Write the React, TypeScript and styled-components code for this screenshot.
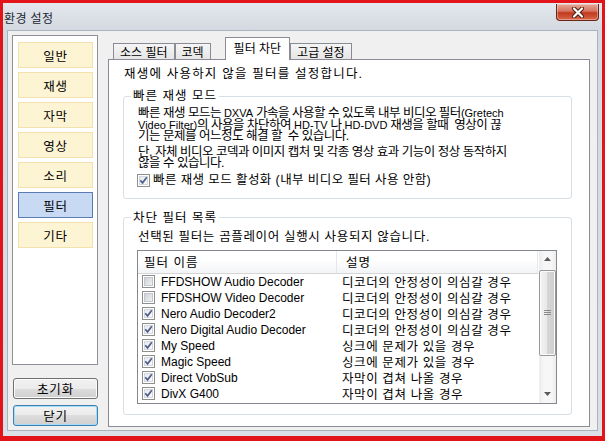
import React from 'react';
import styled, { createGlobalStyle } from 'styled-components';

const UI_FONT = `"Liberation Sans", "Noto Sans CJK KR", sans-serif`;

const GlobalStyle = createGlobalStyle`
  html, body { margin: 0; padding: 0; }
  body {
    width: 605px;
    height: 441px;
    overflow: hidden;
    background: #fff;
    font-family: ${UI_FONT};
    font-size: 12px;
    color: #000;
  }
`;

const NAV_ITEMS = ['일반', '재생', '자막', '영상', '소리', '필터', '기타'];
const ACTIVE_NAV = '필터';

const TABS = ['소스 필터', '코덱', '필터 차단', '고급 설정'];
const ACTIVE_TAB = '필터 차단';

const FILTERS: [string, string, boolean][] = [
  ['FFDSHOW Audio Decoder', '디코더의 안정성이 의심갈 경우', false],
  ['FFDSHOW Video Decoder', '디코더의 안정성이 의심갈 경우', false],
  ['Nero Audio Decoder2', '디코더의 안정성이 의심갈 경우', true],
  ['Nero Digital Audio Decoder', '디코더의 안정성이 의심갈 경우', true],
  ['My Speed', '싱크에 문제가 있을 경우', true],
  ['Magic Speed', '싱크에 문제가 있을 경우', true],
  ['Direct VobSub', '자막이 겹쳐 나올 경우', true],
  ['DivX G400', '자막이 겹쳐 나올 경우', true],
];

const Window = styled.div`
  width: 605px;
  height: 441px;
  box-sizing: border-box;
  border: 3px solid #e3131a;
  border-bottom-width: 5px;
  background: linear-gradient(#e4e8ed, #d3d9e0 27px, #dbe0e6);
  display: flex;
  flex-direction: column;
`;

const TitleBar = styled.div`
  height: 27px;
  flex: none;
  display: flex;
  justify-content: space-between;
  padding: 0 3px 0 1px;
`;

const Title = styled.span`
  align-self: center;
  margin-top: 2px;
  font-size: 12px;
  letter-spacing: 0.4px;
  color: #1b2733;
`;

const CloseButton = styled.div`
  margin-top: 1px;
  width: 43px;
  height: 17px;
  box-sizing: border-box;
  border: 1px solid #6b2418;
  border-top: none;
  border-radius: 0 0 4px 4px;
  background: linear-gradient(#e7a89a, #d4735f 45%, #c2391d 55%, #d9684c);
  box-shadow: inset 0 0 0 1px rgba(255, 255, 255, 0.35);
  display: flex;
  align-items: center;
  justify-content: center;
`;

const Client = styled.div`
  flex: 1;
  margin: 0 4px 5px;
  border: 1px solid #a9b3bd;
  background: #f0f0f0;
  display: flex;
  gap: 10px;
  padding: 4px 7px 3px 4px;
`;

const LeftCol = styled.div`
  width: 86px;
  flex: none;
  display: flex;
  flex-direction: column;
`;

const NavPanel = styled.div`
  height: 330px;
  box-sizing: border-box;
  border: 1px solid #8d9197;
  background: #fff;
  padding: 6px 0 0 5px;
  display: flex;
  flex-direction: column;
  gap: 4px;
`;

const NavItem = styled.div<{ $active?: boolean }>`
  width: 75px;
  height: 26px;
  box-sizing: border-box;
  border: 1px solid ${(p) => (p.$active ? '#5a7cb3' : '#f2e1ad')};
  background: ${(p) => (p.$active ? '#c8d9f4' : '#fdf4d4')};
  display: flex;
  align-items: center;
  justify-content: center;
  font-size: 12.5px;
  letter-spacing: 0.8px;
`;

const PushButton = styled.div<{ $default?: boolean }>`
  width: 85px;
  height: 21px;
  box-sizing: border-box;
  margin-left: 1px;
  border: 1px solid ${(p) => (p.$default ? '#3c7fb1' : '#707070')};
  border-radius: 3px;
  background: linear-gradient(#f2f2f2, #ebebeb 50%, #dddddd 50%, #cfcfcf);
  box-shadow: inset 0 0 0 1px ${(p) => (p.$default ? '#a6dcf7' : '#fbfbfb')};
  display: flex;
  align-items: center;
  justify-content: center;
  font-size: 12.5px;
  letter-spacing: 0.8px;
`;

const ResetButton = styled(PushButton)`
  margin-top: 13px;
`;

const CloseDialogButton = styled(PushButton)`
  margin-top: 6px;
`;

const RightCol = styled.div`
  flex: 1;
  display: flex;
  flex-direction: column;
`;

const TabStrip = styled.div`
  height: 24px;
  flex: none;
  display: flex;
  align-items: flex-end;
  padding-left: 5px;
  position: relative;
  z-index: 1;
`;

const Tab = styled.div<{ $active?: boolean; $gapAfter?: boolean }>`
  height: ${(p) => (p.$active ? 23 : 16)}px;
  margin-bottom: ${(p) => (p.$active ? -1 : 0)}px;
  margin-right: ${(p) => (p.$gapAfter ? 14 : 0)}px;
  box-sizing: border-box;
  border: 1px solid #898c95;
  border-bottom: none;
  background: ${(p) => (p.$active ? '#fff' : 'linear-gradient(#f5f5f5, #e6e6e6)')};
  padding: ${(p) => (p.$active ? '0 8px 3px' : '0 6px')};
  display: flex;
  align-items: center;
  font-size: 12px;
  white-space: nowrap;
`;

const TabPanel = styled.div`
  flex: 1;
  border: 1px solid #898c95;
  background: #fff;
  padding: 8px 17px 0 14px;
  display: flex;
  flex-direction: column;
  font-size: 12.5px;
  letter-spacing: 0.4px;
`;

const Intro = styled.div`
  line-height: 12px;
  margin-left: 1px;
  white-space: nowrap;
  letter-spacing: 1.2px;
`;

const Group = styled.fieldset<{ $top: number }>`
  margin: ${(p) => p.$top}px 0 0;
  border: 1px solid #d5dfe5;
  border-radius: 3px;
  padding: 0 14px;
  min-width: 0;
`;

const Legend = styled.legend`
  margin-left: -7px;
  padding: 0 2px;
  line-height: 12px;
  letter-spacing: 1px;
`;

const Paragraph = styled.div<{ $top?: number }>`
  margin-top: ${(p) => p.$top ?? 0}px;
  line-height: 11.5px;
  white-space: pre;
  letter-spacing: -0.5px;
`;

const Latin = styled.span`
  font-size: 11px;
  letter-spacing: 0;
`;

const CheckRow = styled.label`
  display: flex;
  align-items: center;
  gap: 3px;
  margin: 4px 0 11px -1px;
  height: 13px;
  line-height: 13px;
  white-space: nowrap;
`;

const GroupText = styled.div`
  margin-top: 7px;
  line-height: 12px;
  white-space: nowrap;
  letter-spacing: 0.65px;
`;

const ListBox = styled.div`
  margin: 7px 0 10px -1px;
  height: 154px;
  box-sizing: border-box;
  border: 1px solid #828790;
  display: flex;
  overflow: hidden;
`;

const ListMain = styled.div`
  flex: 1;
  display: flex;
  flex-direction: column;
  overflow: hidden;
`;

const HeaderRow = styled.div`
  height: 23px;
  flex: none;
  display: flex;
  box-sizing: border-box;
  margin-right: 1px;
  background: linear-gradient(#ffffff, #ffffff 40%, #f3f4f6);
  border-bottom: 1px solid #d5d5d5;
  letter-spacing: 1px;
`;

const HeaderCell = styled.div<{ $width?: number; $pad: number }>`
  width: ${(p) => (p.$width ? `${p.$width}px` : 'auto')};
  flex: ${(p) => (p.$width ? 'none' : 1)};
  padding-left: ${(p) => p.$pad}px;
  box-sizing: border-box;
  display: flex;
  align-items: center;
  border-right: 1px solid #e3e8ee;
`;

const Row = styled.div`
  height: 16px;
  flex: none;
  display: flex;
  align-items: center;
  white-space: nowrap;
`;

const NameCell = styled.div`
  width: 204px;
  flex: none;
  display: flex;
  align-items: center;
  gap: 6px;
  padding-left: 4px;
  box-sizing: border-box;
  font-size: 12px;
  letter-spacing: 0;
`;

const DescCell = styled.div`
  flex: 1;
  letter-spacing: 0.6px;
`;

const CheckBox = styled.span`
  width: 13px;
  height: 13px;
  flex: none;
  box-sizing: border-box;
  border: 1px solid #8f8f8f;
  background: #fff;
  padding: 1px;
  display: flex;
`;

const CheckInner = styled.span<{ $checked?: boolean }>`
  flex: 1;
  border: 1px solid ${(p) => (p.$checked ? '#d4d7db' : '#c3c7cc')};
  background: ${(p) =>
    p.$checked ? 'linear-gradient(135deg, #e6e8eb, #fbfbfb)' : 'linear-gradient(135deg, #cfd3d8, #eff0f1)'};
  position: relative;
`;

const CheckMark = styled.svg`
  position: absolute;
  left: -1px;
  top: -1px;
`;

const ScrollBar = styled.div`
  width: 17px;
  flex: none;
  display: flex;
  flex-direction: column;
  background: linear-gradient(90deg, #ececec, #f7f7f7 30%, #f7f7f7 70%, #ececec);
`;

const ScrollArrow = styled.div`
  height: 17px;
  flex: none;
  display: flex;
  align-items: center;
  justify-content: center;
`;

const Thumb = styled.div`
  margin-top: 2px;
  height: 86px;
  box-sizing: border-box;
  border: 1px solid #979797;
  border-radius: 2px;
  background: linear-gradient(90deg, #f3f3f3, #e8e8e8 50%, #d6d6d6 50%, #cfcfcf);
  box-shadow: inset 0 0 0 1px #fcfcfc;
  display: flex;
  align-items: center;
  justify-content: center;
`;

const Track = styled.div`
  flex: 1;
`;

function Check({ checked }: { checked?: boolean }) {
  return (
    <CheckBox>
      <CheckInner $checked={checked}>
        {checked && (
          <CheckMark width="9" height="9" viewBox="0 0 9 9">
            <path d="M1.3 4.3 L3.6 6.8 L7.8 1.2" stroke="#4c5f8f" strokeWidth="1.7" fill="none" />
          </CheckMark>
        )}
      </CheckInner>
    </CheckBox>
  );
}

export default function App() {
  return (
    <>
      <GlobalStyle />
      <Window>
        <TitleBar>
          <Title>환경 설정</Title>
          <CloseButton>
            <svg width="14" height="11" viewBox="0 0 14 11">
              <path d="M3 1.5 L11 9.5 M11 1.5 L3 9.5" stroke="#4a1c12" strokeWidth="4" strokeLinecap="round" />
              <path d="M3 1.5 L11 9.5 M11 1.5 L3 9.5" stroke="#fff" strokeWidth="2.2" strokeLinecap="round" />
            </svg>
          </CloseButton>
        </TitleBar>

        <Client>
          <LeftCol>
            <NavPanel>
              {NAV_ITEMS.map((item) => (
                <NavItem key={item} $active={item === ACTIVE_NAV}>
                  {item}
                </NavItem>
              ))}
            </NavPanel>
            <ResetButton>초기화</ResetButton>
            <CloseDialogButton $default>닫기</CloseDialogButton>
          </LeftCol>

          <RightCol>
            <TabStrip>
              {TABS.map((tab) => (
                <Tab key={tab} $active={tab === ACTIVE_TAB} $gapAfter={tab === '코덱'}>
                  {tab}
                </Tab>
              ))}
            </TabStrip>
            <TabPanel>
              <Intro>재생에 사용하지 않을 필터를 설정합니다.</Intro>

              <Group $top={10}>
                <Legend>빠른 재생 모드</Legend>
                <Paragraph $top={6}>
                  빠른 재생 모드는 <Latin>DXVA</Latin> 가속을 사용할 수 있도록 내부 비디오 필터
                  <Latin>(Gretech</Latin>
                  {'\n'}
                  <Latin>Video Filter)</Latin>의 사용을 차단하여 <Latin>HD-TV</Latin> 나{' '}
                  <Latin>HD-DVD</Latin> 재생을 할때{'  '}영상이 끊{'\n'}
                  기는 문제를 어느정도 해결 할{'  '}수 있습니다.
                </Paragraph>
                <Paragraph $top={4}>
                  {'단, 자체 비디오 코덱과 이미지 캡처 및 각종 영상 효과 기능이 정상 동작하지\n'}
                  {'않을 수 있습니다.'}
                </Paragraph>
                <CheckRow>
                  <Check checked />
                  빠른 재생 모드 활성화 (내부 비디오 필터 사용 안함)
                </CheckRow>
              </Group>

              <Group $top={13}>
                <Legend>차단 필터 목록</Legend>
                <GroupText>선택된 필터는 곰플레이어 실행시 사용되지 않습니다.</GroupText>
                <ListBox>
                  <ListMain>
                    <HeaderRow>
                      <HeaderCell $width={199} $pad={6}>필터 이름</HeaderCell>
                      <HeaderCell $pad={9}>설명</HeaderCell>
                    </HeaderRow>
                    {FILTERS.map(([name, desc, checked]) => (
                      <Row key={name}>
                        <NameCell>
                          <Check checked={checked} />
                          {name}
                        </NameCell>
                        <DescCell>{desc}</DescCell>
                      </Row>
                    ))}
                  </ListMain>
                  <ScrollBar>
                    <ScrollArrow>
                      <svg width="7" height="4" viewBox="0 0 7 4">
                        <path d="M0 4 L3.5 0 L7 4 Z" fill="#5d5d5d" />
                      </svg>
                    </ScrollArrow>
                    <Thumb>
                      <svg width="7" height="6" viewBox="0 0 7 6">
                        <path d="M0 0.5 H7 M0 2.5 H7 M0 4.5 H7" stroke="#8a8a8a" strokeWidth="1" />
                      </svg>
                    </Thumb>
                    <Track />
                    <ScrollArrow>
                      <svg width="7" height="4" viewBox="0 0 7 4">
                        <path d="M0 0 L3.5 4 L7 0 Z" fill="#5d5d5d" />
                      </svg>
                    </ScrollArrow>
                  </ScrollBar>
                </ListBox>
              </Group>
            </TabPanel>
          </RightCol>
        </Client>
      </Window>
    </>
  );
}
